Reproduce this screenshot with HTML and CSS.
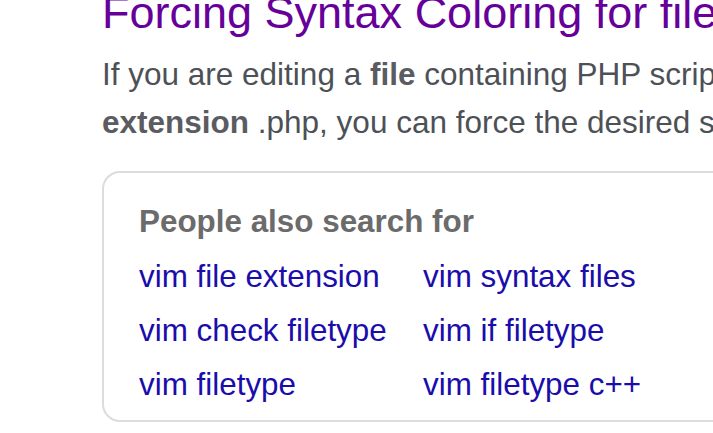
FILE: index.html
```html
<!DOCTYPE html>
<html lang="en">
<head>
<meta charset="utf-8">
<title>Forcing Syntax Coloring for file</title>
<link rel="stylesheet" href="styles.css">
</head>
<body>
<div class="page">
  <h2 class="title"><a href="#">Forcing Syntax Coloring for file extensions</a></h2>
  <p class="snippet">If you are editing a <b>file</b> containing PHP script but which does not have the<br><b>extension</b> .php, you can force the desired syntax coloring</p>
  <div class="related">
    <h3 class="related-title">People also search for</h3>
    <div class="related-grid">
      <a href="#">vim file extension</a>
      <a href="#">vim syntax files</a>
      <a href="#">vim check filetype</a>
      <a href="#">vim if filetype</a>
      <a href="#">vim filetype</a>
      <a href="#">vim filetype c++</a>
    </div>
  </div>
</div>
</body>
</html>
```
FILE: styles.css
```css
html, body {
  margin: 0;
  padding: 0;
  background: #fff;
  overflow: hidden;
}
body {
  font-family: "Liberation Sans", Arial, sans-serif;
}
.page {
  padding-left: 102px;
  width: 900px;
}
.title {
  margin: -13px 0 0 0;
  font-size: 45px;
  line-height: 52px;
  font-weight: normal;
  white-space: nowrap;
}
.title a {
  color: #660099;
  text-decoration: none;
}
.snippet {
  margin: 11px 0 0 0;
  font-size: 31.5px;
  line-height: 48px;
  color: #4d5156;
  white-space: nowrap;
}
.snippet b {
  color: #5a5c61;
}
.related {
  margin-top: 25px;
  border: 2px solid #dcdcdf;
  border-radius: 18px;
  padding: 25px 0 8px 35px;
  width: 760px;
}
.related-title {
  margin: 0 0 4px 0;
  font-size: 31.4px;
  line-height: 48px;
  font-weight: bold;
  color: #6b6b6b;
}
.related-grid {
  display: grid;
  grid-template-columns: 284px 284px;
  font-size: 31.4px;
  line-height: 54px;
}
.related-grid a {
  color: #1a0dab;
  text-decoration: none;
  white-space: nowrap;
}
```
